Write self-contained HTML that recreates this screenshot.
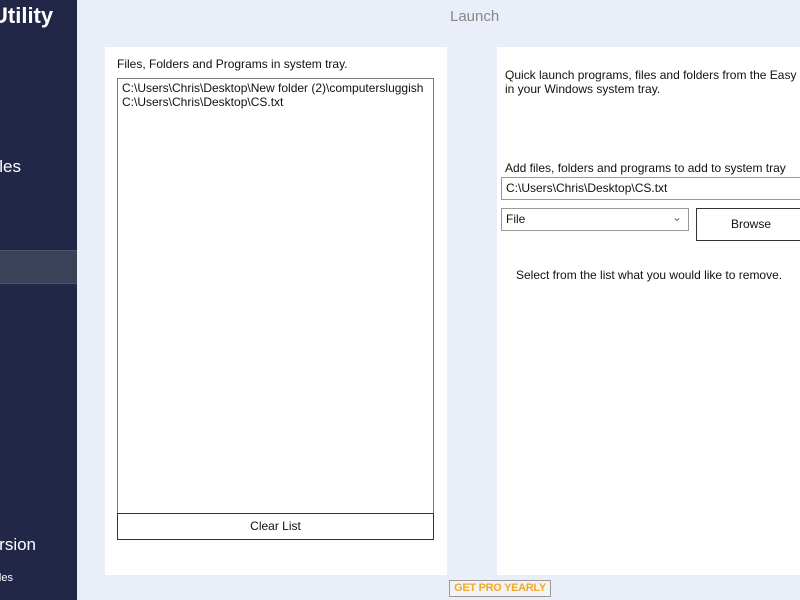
<!DOCTYPE html>
<html><head><style>
html,body{margin:0;width:800px;height:600px;overflow:hidden}
body{background:#e9eef8;font-family:"Liberation Sans",sans-serif;position:relative}
.a{position:absolute}
.side{left:0;top:0;width:77px;height:600px;background:#232747;color:#fff;overflow:hidden}
.t{font-size:12px;color:#111;white-space:nowrap}
.box{background:#fff;border:1px solid #7a7a7a;box-sizing:border-box}
</style></head><body>
<div class="a side">
 <div class="a" style="left:-8px;top:3px;font-size:22px;font-weight:bold">Utility</div>
 <div class="a" style="right:56px;top:157px;font-size:17px;white-space:nowrap">Files</div>
 <div class="a" style="left:0;top:250px;width:77px;height:32px;background:#3b4159;border-top:1px solid #4c5269;border-bottom:1px solid #4c5269"></div>
 <div class="a" style="right:41px;top:535px;font-size:17px;white-space:nowrap">Version</div>
 <div class="a" style="right:64px;top:572px;font-size:11px;white-space:nowrap">rules</div>
</div>
<div class="a" style="left:450px;top:8px;font-size:15px;color:#888">Launch</div>
<div class="a" style="left:105px;top:47px;width:342px;height:528px;background:#fff"></div>
<div class="a t" style="left:117px;top:57px">Files, Folders and Programs in system tray.</div>
<div class="a box" style="left:117px;top:78px;width:317px;height:436px;overflow:hidden">
 <div class="t" style="padding:2px 0 0 4px;line-height:14px">C:\Users\Chris\Desktop\New folder (2)\computersluggish<br>C:\Users\Chris\Desktop\CS.txt</div>
</div>
<div class="a box t" style="left:117px;top:513px;width:317px;height:27px;border:1px solid #333;text-align:center;line-height:25px">Clear List</div>
<div class="a" style="left:497px;top:47px;width:303px;height:528px;background:#fff"></div>
<div class="a t" style="left:505px;top:68px;line-height:14px">Quick launch programs, files and folders from the Easy<br>in your Windows system tray.</div>
<div class="a t" style="left:505px;top:161px">Add files, folders and programs to add to system tray</div>
<div class="a box t" style="left:501px;top:177px;width:310px;height:23px;padding:3px 0 0 4px;border-color:#999">C:\Users\Chris\Desktop\CS.txt</div>
<div class="a box t" style="left:501px;top:208px;width:188px;height:23px;padding:3px 0 0 4px;border-color:#999">File<span class="a" style="right:6px;top:1px;color:#666">&#8964;</span></div>
<div class="a box t" style="left:696px;top:208px;width:115px;height:33px;border-color:#333;line-height:31px;padding-left:34px">Browse</div>
<div class="a t" style="left:516px;top:268px">Select from the list what you would like to remove.</div>
<div class="a" style="left:449px;top:580px;width:102px;height:17px;border:1px solid #999;box-sizing:border-box;background:#f3f3f3;color:#f2a928;font-size:11px;font-weight:bold;text-align:center;line-height:15px;white-space:nowrap;overflow:hidden;letter-spacing:-0.3px">GET PRO YEARLY</div>
</body></html>
